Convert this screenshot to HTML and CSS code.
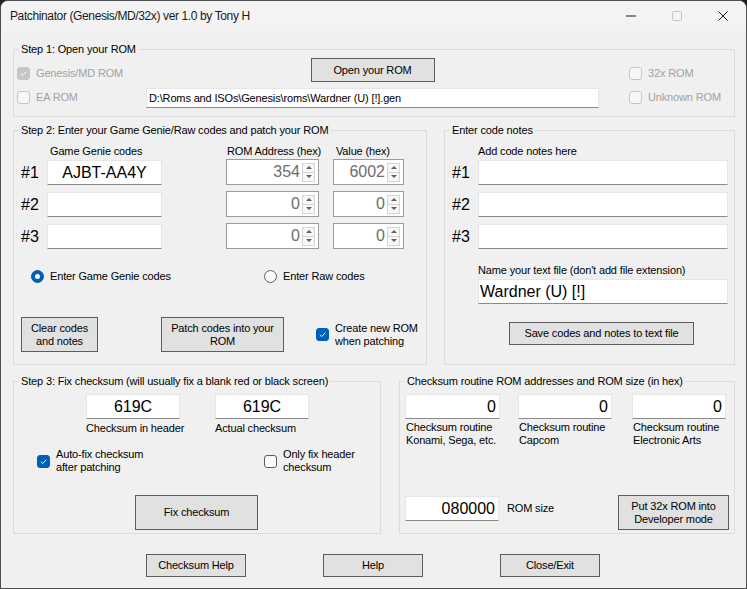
FILE: index.html
```html
<!DOCTYPE html>
<html>
<head>
<meta charset="utf-8">
<title>Patchinator</title>
<link rel="stylesheet" href="styles.css">
</head>
<body>
<div class="window">
  <div class="titlebar">
    <span class="title">Patchinator (Genesis/MD/32x) ver 1.0 by Tony H</span>
    <div class="controls">
      <span class="ctl"><svg width="10" height="10" viewBox="0 0 10 10"><rect x="0" y="4.5" width="10" height="1" fill="#1a1a1a"/></svg></span>
      <span class="ctl"><svg width="10" height="10" viewBox="0 0 10 10"><rect x="0.5" y="0.5" width="9" height="9" rx="1.2" fill="none" stroke="#c4c4c4"/></svg></span>
      <span class="ctl"><svg width="10" height="10" viewBox="0 0 10 10"><path d="M0.5 0.5 L9.5 9.5 M9.5 0.5 L0.5 9.5" stroke="#1a1a1a" stroke-width="1"/></svg></span>
    </div>
  </div>
  <div class="client">
    <fieldset class="group g1">
      <legend>Step 1: Open your ROM</legend>
      <div class="g1-body">
        <div class="chk-col">
          <div class="check disabled"><span class="cb checked"><svg viewBox="0 0 13 13"><path d="M3.4 6.8 L5.6 8.9 L9.7 4.5" fill="none" stroke="#fff" stroke-width="1.1"/></svg></span><span>Genesis/MD ROM</span></div>
          <div class="check disabled"><span class="cb"></span><span>EA ROM</span></div>
        </div>
        <div class="mid-col">
          <div class="btn btn-open">Open your ROM</div>
          <div class="tb path">D:\Roms and ISOs\Genesis\roms\Wardner (U) [!].gen</div>
        </div>
        <div class="chk-col right">
          <div class="check disabled"><span class="cb"></span><span>32x ROM</span></div>
          <div class="check disabled"><span class="cb"></span><span>Unknown ROM</span></div>
        </div>
      </div>
    </fieldset>

    <div class="row2">
      <fieldset class="group g2">
        <legend>Step 2: Enter your Game Genie/Raw codes and patch your ROM</legend>
        <div class="codes-head">
          <span class="h-gg">Game Genie codes</span>
          <span class="h-addr">ROM Address (hex)</span>
          <span class="h-val">Value (hex)</span>
        </div>
        <div class="codes">
          <span class="num">#1</span>
          <div class="tb big center gg">AJBT-AA4Y</div>
          <div class="spin addr"><span class="sval">354</span><span class="arrows"><span class="up"></span><span class="dn"></span></span></div>
          <div class="spin value"><span class="sval">6002</span><span class="arrows"><span class="up"></span><span class="dn"></span></span></div>

          <span class="num">#2</span>
          <div class="tb big center gg"></div>
          <div class="spin addr"><span class="sval">0</span><span class="arrows"><span class="up"></span><span class="dn"></span></span></div>
          <div class="spin value"><span class="sval">0</span><span class="arrows"><span class="up"></span><span class="dn"></span></span></div>

          <span class="num">#3</span>
          <div class="tb big center gg"></div>
          <div class="spin addr"><span class="sval">0</span><span class="arrows"><span class="up"></span><span class="dn"></span></span></div>
          <div class="spin value"><span class="sval">0</span><span class="arrows"><span class="up"></span><span class="dn"></span></span></div>
        </div>
        <div class="radios">
          <div class="radio first"><span class="rb on"></span><span>Enter Game Genie codes</span></div>
          <div class="radio"><span class="rb"></span><span>Enter Raw codes</span></div>
        </div>
        <div class="actions">
          <div class="btn btn-clear">Clear codes<br>and notes</div>
          <div class="btn btn-patch">Patch codes into your<br>ROM</div>
          <div class="check two act-check"><span class="cb checked blue"><svg viewBox="0 0 13 13"><path d="M3.4 6.8 L5.6 8.9 L9.7 4.5" fill="none" stroke="#fff" stroke-width="1.1"/></svg></span><span>Create new ROM<br>when patching</span></div>
        </div>
      </fieldset>

      <fieldset class="group notes">
        <legend>Enter code notes</legend>
        <div class="notes-head">Add code notes here</div>
        <div class="notes-rows">
          <span class="num">#1</span><div class="tb note"></div>
          <span class="num">#2</span><div class="tb note"></div>
          <span class="num">#3</span><div class="tb note"></div>
        </div>
        <div class="name-label">Name your text file (don't add file extension)</div>
        <div class="tb big name">Wardner (U) [!]</div>
        <div class="btn btn-save">Save codes and notes to text file</div>
      </fieldset>
    </div>

    <div class="row3">
      <fieldset class="group g3">
        <legend>Step 3: Fix checksum (will usually fix a blank red or black screen)</legend>
        <div class="sums">
          <div class="sum-col first">
            <div class="tb big center sum">619C</div>
            <div class="sum-label">Checksum in header</div>
          </div>
          <div class="sum-col">
            <div class="tb big center sum">619C</div>
            <div class="sum-label">Actual checksum</div>
          </div>
        </div>
        <div class="fix-checks">
          <div class="check two first"><span class="cb checked blue"><svg viewBox="0 0 13 13"><path d="M3.4 6.8 L5.6 8.9 L9.7 4.5" fill="none" stroke="#fff" stroke-width="1.1"/></svg></span><span>Auto-fix checksum<br>after patching</span></div>
          <div class="check two"><span class="cb"></span><span>Only fix header<br>checksum</span></div>
        </div>
        <div class="btn btn-fix">Fix checksum</div>
      </fieldset>

      <fieldset class="group g4">
        <legend>Checksum routine ROM addresses and ROM size (in hex)</legend>
        <div class="routines">
          <div class="rt-col c1">
            <div class="tb big right rt">0</div>
            <div class="rt-label">Checksum routine<br>Konami, Sega, etc.</div>
          </div>
          <div class="rt-col c2">
            <div class="tb big right rt">0</div>
            <div class="rt-label">Checksum routine<br>Capcom</div>
          </div>
          <div class="rt-col c3">
            <div class="tb big right rt">0</div>
            <div class="rt-label">Checksum routine<br>Electronic Arts</div>
          </div>
        </div>
        <div class="size-row">
          <div class="tb big right size">080000</div>
          <span class="size-label">ROM size</span>
          <div class="btn btn-dev">Put 32x ROM into<br>Developer mode</div>
        </div>
      </fieldset>
    </div>

    <div class="bottom">
      <div class="btn btn-bottom">Checksum Help</div>
      <div class="btn btn-bottom">Help</div>
      <div class="btn btn-bottom">Close/Exit</div>
    </div>
  </div>
</div>
</body>
</html>
```

FILE: styles.css
```css
* { box-sizing: border-box; }
html, body { margin: 0; padding: 0; background: #202020; }
body {
  font-family: "Liberation Sans", Arial, sans-serif;
  font-size: 11px;
  letter-spacing: -0.15px;
  color: #000;
}

.window {
  width: 747px;
  height: 589px;
  border: 1px solid #4e4e4e;
  border-radius: 8px 8px 0 0;
  background: #f0f0f0;
  overflow: hidden;
  display: flex;
  flex-direction: column;
}

/* title bar */
.titlebar {
  height: 30px;
  flex: none;
  background: #f3f3f3;
  display: flex;
  align-items: center;
}
.title {
  flex: 1;
  padding-left: 9px;
  font-family: "Liberation Sans", Arial, sans-serif;
  font-size: 12px;
  letter-spacing: -0.38px;
  color: #1a1a1a;
}
.controls { display: flex; height: 30px; }
.ctl {
  width: 46px;
  height: 30px;
  display: flex;
  align-items: center;
  justify-content: center;
}

/* client area */
.client {
  flex: 1;
  padding: 11px 11px 0 12px;
  display: flex;
  flex-direction: column;
}

.group {
  margin: 0;
  padding: 0;
  border: 1px solid #dcdcdc;
  min-width: 0;
}
.group legend {
  padding: 0 2px;
  margin-left: 5px;
  line-height: 14px;
}

/* common controls */
.tb {
  background: #fff;
  border: 1px solid #e6e6e6;
  border-bottom-color: #8a8a8a;
  height: 25px;
  white-space: nowrap;
  overflow: hidden;
}
.tb.big {
  font-size: 16px;
  letter-spacing: 0;
  line-height: 23px;
}
.tb.center { text-align: center; }
.tb.right { text-align: right; padding-right: 3px; }

.btn {
  background: #e1e1e1;
  border: 1px solid #5c5c5c;
  display: flex;
  align-items: center;
  justify-content: center;
  text-align: center;
  line-height: 13px;
  flex: none;
}

.check {
  display: flex;
  align-items: flex-start;
  line-height: 14px;
  height: 14px;
}
.check .cb { margin-top: 1px; margin-right: 6px; }
.check.disabled { color: #a2a2a2; }
.check.two {
  height: auto;
  line-height: 13px;
  align-items: center;
}
.check.two .cb { margin-top: 0; }

.cb {
  width: 13px;
  height: 13px;
  flex: none;
  border: 1px solid #5e5e5e;
  border-radius: 3px;
  background: #fbfbfb;
  display: block;
}
.cb svg { display: block; width: 11px; height: 11px; margin: 0; }
.check.disabled .cb { border-color: #c6c6c6; background: #f7f7f7; }
.check.disabled .cb.checked { background: #c6c6c6; border-color: #c6c6c6; }
.cb.checked.blue { background: #005fb8; border-color: #005fb8; }

.rb {
  width: 13px;
  height: 13px;
  flex: none;
  border-radius: 50%;
  border: 1px solid #5e5e5e;
  background: #fbfbfb;
  margin-right: 6px;
  position: relative;
}
.rb.on { background: #005fb8; border-color: #005fb8; }
.rb.on::after {
  content: "";
  position: absolute;
  left: 3px;
  top: 3px;
  width: 5px;
  height: 5px;
  border-radius: 50%;
  background: #fff;
}

/* group 1 */
.g1 { height: 75px; flex: none; }
.g1-body { display: flex; }
.chk-col {
  width: 132px;
  padding: 10px 0 0 3px;
  display: flex;
  flex-direction: column;
  gap: 10px;
}
.chk-col.right { width: auto; padding-left: 30px; }
.mid-col {
  width: 453px;
  display: flex;
  flex-direction: column;
  align-items: center;
}
.btn-open { width: 124px; height: 24px; margin-top: 2px; }
.tb.path {
  width: 453px;
  height: 20px;
  margin-top: 6px;
  line-height: 18px;
  padding-left: 2px;
  font-size: 11px;
}

/* row 2 */
.row2 {
  display: flex;
  gap: 17px;
  margin-top: 6px;
  height: 242px;
  flex: none;
}
.g2 { width: 414px; }
.notes { width: 291px; }

.codes-head, .codes {
  display: grid;
  grid-template-columns: 33px 179px 107px 71px;
}
.codes-head { margin-top: 7px; height: 14px; line-height: 14px; }
.h-gg { grid-column: 2; padding-left: 3px; }
.h-addr { grid-column: 3; padding-left: 1px; }
.h-val { grid-column: 4; padding-left: 3px; }

.codes {
  margin-top: 1px;
  grid-auto-rows: 26px;
  row-gap: 6px;
}
.num {
  font-size: 16px;
  letter-spacing: 0;
  line-height: 28px;
  padding-left: 7px;
}
.tb.gg { width: 115px; margin-top: 1px; }

.spin {
  background: #fff;
  border: 1px solid #9c9c9c;
  height: 26px;
  display: flex;
  align-items: center;
  justify-content: flex-end;
  padding-right: 3px;
}
.spin.addr { width: 93px; }
.spin.value { width: 71px; }
.sval {
  font-size: 16px;
  letter-spacing: 0;
  color: #6d6d6d;
  margin-right: 2px;
}
.arrows {
  width: 13px;
  height: 19px;
  display: flex;
  flex-direction: column;
}
.arrows .up, .arrows .dn {
  flex: 1;
  border: 1px solid #d4d4d4;
  background: #f7f7f7;
  display: flex;
  align-items: center;
  justify-content: center;
}
.arrows .dn { border-top: none; }
.arrows .up::after {
  content: "";
  border-left: 3px solid transparent;
  border-right: 3px solid transparent;
  border-bottom: 3px solid #606060;
}
.arrows .dn::after {
  content: "";
  border-left: 3px solid transparent;
  border-right: 3px solid transparent;
  border-top: 3px solid #606060;
}

.radios {
  display: flex;
  margin-top: 20px;
  padding-left: 17px;
  height: 14px;
}
.radio {
  display: flex;
  align-items: center;
  line-height: 14px;
}
.radio.first { width: 233px; }

.actions {
  display: flex;
  align-items: center;
  margin-top: 34px;
  padding-left: 7px;
}
.btn-clear { width: 77px; height: 35px; }
.btn-patch { width: 123px; height: 35px; margin-left: 63px; }
.act-check { margin-left: 32px; }
.act-check .cb { margin-right: 6px; }

/* notes */
.notes-head { margin-top: 7px; height: 14px; line-height: 14px; padding-left: 33px; }
.notes-rows {
  display: grid;
  grid-template-columns: 33px 250px;
  grid-auto-rows: 26px;
  row-gap: 6px;
  margin-top: 1px;
}
.tb.note { width: 250px; margin-top: 1px; }
.name-label { margin-top: 14px; padding-left: 33px; line-height: 14px; height: 14px; }
.tb.name {
  width: 250px;
  margin: 2px 0 0 33px;
  padding-left: 1px;
}
.btn-save { width: 185px; height: 23px; margin: 18px 0 0 64px; }

/* row 3 */
.row3 {
  display: flex;
  gap: 18px;
  margin-top: 9px;
  height: 160px;
  flex: none;
}
.g3 { width: 368px; }
.g4 { width: 336px; }

.sums { display: flex; margin-top: 6px; padding-left: 72px; }
.sum-col.first { width: 129px; }
.tb.sum { width: 94px; }
.sum-label { margin-top: 2px; line-height: 14px; }

.fix-checks { display: flex; margin-top: 13px; padding-left: 23px; }
.fix-checks .check.first { width: 227px; }

.btn-fix { width: 123px; height: 35px; margin: 21px 0 0 121px; }

.routines { display: flex; margin-top: 6px; padding-left: 5px; }
.rt-col.c1 { width: 113px; }
.rt-col.c2 { width: 114px; }
.rt-col.c1 .tb.rt { width: 95px; }
.tb.rt { width: 94px; }
.rt-label { margin-top: 2px; line-height: 13px; padding-left: 1px; }

.size-row {
  display: flex;
  align-items: flex-start;
  margin-top: 48px;
  padding: 0 5px;
}
.tb.size { width: 94px; margin-top: 1px; }
.size-label { margin: 1px 0 0 8px; line-height: 25px; }
.btn-dev { width: 111px; height: 35px; margin-left: auto; }

/* bottom */
.bottom {
  display: flex;
  gap: 77px;
  margin-top: 20px;
  padding-left: 133px;
}
.btn-bottom { width: 100px; height: 23px; }
```
